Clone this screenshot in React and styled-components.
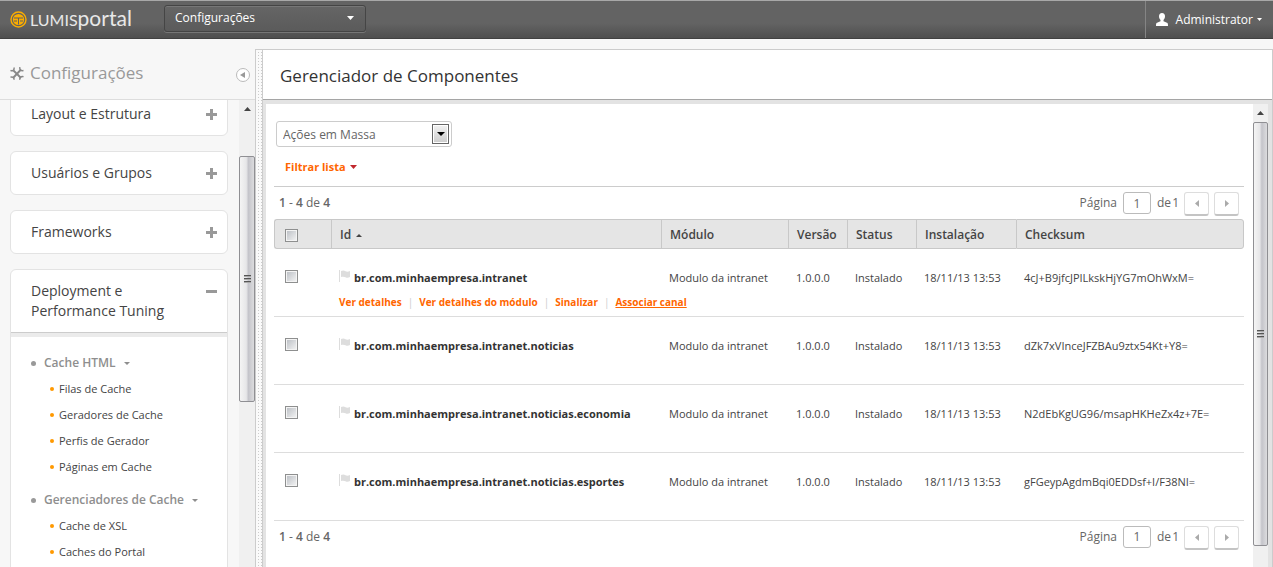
import React from "react";
import styled, { createGlobalStyle } from "styled-components";

const Global = createGlobalStyle`
  *, *::before, *::after { box-sizing: border-box; }
  body {
    margin: 0;
    background: #f7f7f7;
    font: 12px/16px "Open Sans", "Noto Sans", sans-serif;
    color: #444;
  }
  button, input, select { font: inherit; color: inherit; }
  a { color: inherit; text-decoration: none; }
`;

const Shell = styled.div`
  display: flex;
  flex-direction: column;
  height: 100vh;
  overflow: hidden;
`;

const TopBar = styled.header`
  display: flex;
  align-items: stretch;
  flex: none;
  height: 39px;
  border-top: 1px solid #a8a8a8;
  border-bottom: 1px solid #414141;
  background: linear-gradient(#636363 0, #636363 60%, #4f4f4f 100%);
  color: #fff;
`;

const Brand = styled.a`
  display: flex;
  align-items: center;
  gap: 3px;
  width: 154px;
  padding: 0 0 2px 10px;
`;

const BrandName = styled.span`
  font: 400 21px/32px Lato, sans-serif;
  color: #e8e8e8;
`;

const BrandCaps = styled.span`
  font-size: 16px;
`;

const AreaPicker = styled.div`
  display: grid;
  align-self: center;
  width: 202px;
  margin: 0 0 3px 10px;
`;

const AreaSelect = styled.select`
  grid-area: 1 / 1;
  appearance: none;
  height: 27px;
  padding: 0 10px;
  border: 1px solid #454545;
  border-radius: 3px;
  background: linear-gradient(#656565, #5b5b5b);
  box-shadow: inset 0 1px 0 #777, 0 1px 0 #777;
  color: #fff;
`;

const AreaCaret = styled.span`
  grid-area: 1 / 1;
  place-self: center end;
  display: flex;
  margin-right: 12px;
  pointer-events: none;
`;

const UserMenu = styled.button`
  display: flex;
  align-items: center;
  gap: 8px;
  margin-left: auto;
  padding: 0 11px 0 10px;
  border: 0;
  border-left: 1px solid #858585;
  background: none;
`;

const UserName = styled.span`
  display: flex;
  align-items: center;
  gap: 4px;
`;

const Body = styled.div`
  display: flex;
  flex: 1;
  min-height: 0;
`;

const Sidebar = styled.aside`
  display: flex;
  flex-direction: column;
  flex: none;
  width: 255px;
`;

const SideHead = styled.div`
  display: flex;
  align-items: center;
  gap: 6px;
  height: 61px;
  padding: 8px 5px 0 10px;
  border-bottom: 1px solid #ddd;
  color: #999;
`;

const SideTitle = styled.h2`
  flex: 1;
  margin: 0;
  font-size: 17px;
  line-height: 24px;
  font-weight: 400;
`;

const CollapseButton = styled.button`
  display: flex;
  align-items: center;
  justify-content: center;
  width: 14px;
  height: 14px;
  margin-top: 3px;
  padding: 0 1px 0 0;
  border: 1px solid #bbb;
  border-radius: 50%;
  background: #fff;
  color: #999;
`;

const SideScroll = styled.div`
  display: flex;
  flex: 1;
  min-height: 0;
`;

const SideNav = styled.nav`
  flex: 1;
  overflow: hidden;
  padding: 0 11px 0 10px;
`;

const CardList = styled.div`
  display: flex;
  flex-direction: column;
  gap: 15px;
  margin-top: -8px;
`;

const Card = styled.section`
  border: 1px solid #e3e3e3;
  border-radius: 6px;
  background: #fff;
`;

const CardHead = styled.button`
  display: flex;
  align-items: flex-start;
  justify-content: space-between;
  width: 100%;
  padding: 11px 9px 11px 20px;
  border: 0;
  background: none;
  font-size: 14px;
  line-height: 20px;
  text-align: left;
`;

const CardIcon = styled.svg`
  flex: none;
  margin-top: 5px;
`;

const CardBody = styled.div`
  padding: 17px 0 40px 20px;
  border-top: 1px solid #ccc;
  box-shadow: inset 0 4px 0 #ebebeb;
`;

const GroupHead = styled.button`
  display: flex;
  align-items: center;
  gap: 8px;
  height: 26px;
  padding: 0;
  border: 0;
  background: none;
  font-weight: 600;
  color: #8e8e8e;
`;

const Bullet = styled.span`
  width: ${(p) => p.$size}px;
  height: ${(p) => p.$size}px;
  border-radius: 50%;
  background: ${(p) => p.$color};
`;

const LinkList = styled.ul`
  margin: 0 0 7px;
  padding: 0 0 0 19px;
  list-style: none;
`;

const LinkItem = styled.li`
  display: flex;
  align-items: center;
  gap: 5px;
  height: 26px;
  font-size: 11px;
`;

const Track = styled.div`
  display: flex;
  flex-direction: column;
  flex: none;
  width: ${(p) => p.$width}px;
  background: #f0f0f0;
`;

const TrackArrow = styled.div`
  display: flex;
  align-items: center;
  justify-content: center;
  flex: none;
  height: 18px;
  color: #444;
`;

const Thumb = styled.div`
  display: flex;
  flex-direction: column;
  align-items: center;
  justify-content: center;
  gap: 1px;
  border: 1px solid #8f8f93;
  border-radius: 2px;
  background: linear-gradient(90deg, #f4f4f4, #e6e6e8 45%, #c4c4ca 60%, #dcdcde);
`;

const Grip = styled.span`
  width: 7px;
  height: 2px;
  border-top: 1px solid #555;
  background: #aaa;
`;

const Splitter = styled.div`
  flex: none;
  width: 8px;
  margin-top: 10px;
  border: 1px solid #ccc;
  border-bottom: 0;
  background: conic-gradient(#d4d4d4 90deg, transparent 0) 1px 1px / 3px 3px #fafafa;
  background:
    linear-gradient(#fafafa 0 2px, transparent 2px) 0 0 / 3px 3px,
    linear-gradient(90deg, #fafafa 0 2px, #ccc 2px) 0 0 / 3px 3px;
`;

const Main = styled.main`
  display: flex;
  flex-direction: column;
  flex: 1;
  min-width: 0;
  margin-top: 10px;
  border-top: 1px solid #ccc;
  border-right: 1px solid #ccc;
`;

const TitleBar = styled.div`
  flex: none;
  padding: 14px 17px 11px;
  border-bottom: 1px solid #a5a5a5;
  background: #fff;
`;

const PageTitle = styled.h1`
  margin: 0;
  font-size: 17px;
  line-height: 24px;
  font-weight: 400;
  color: #333;
`;

const Frame = styled.div`
  display: flex;
  flex: 1;
  min-height: 0;
  border: solid #e3e3e3;
  border-width: 4px 4px 0 3px;
  background: #fff;
`;

const Content = styled.div`
  flex: 1;
  min-width: 0;
  padding: 17px 9px 0 8px;
  overflow: hidden;
`;

const BulkPicker = styled.div`
  display: grid;
  width: 176px;
  margin-left: 2px;
`;

const BulkSelect = styled.select`
  grid-area: 1 / 1;
  appearance: none;
  height: 26px;
  padding: 2px 6px 0;
  border: 1px solid #ccc;
  border-radius: 3px;
  background: #fff;
  color: #666;
`;

const BulkArrow = styled.span`
  grid-area: 1 / 1;
  place-self: center end;
  display: flex;
  align-items: center;
  justify-content: center;
  width: 17px;
  height: 20px;
  margin-right: 3px;
  border: 1px solid #666;
  background: linear-gradient(#f2f2f2, #ccc);
  box-shadow: inset 0 0 0 1px #fff;
  color: #000;
  pointer-events: none;
`;

const FilterToggle = styled.button`
  display: flex;
  align-items: center;
  gap: 4px;
  margin: 12px 0 11px;
  padding: 0 11px;
  border: 0;
  background: none;
  font-weight: 700;
  font-size: 11px;
  color: #f60;

  svg { color: #c1272d; }
`;

const PagerRow = styled.div`
  display: flex;
  align-items: center;
  justify-content: space-between;
  height: ${(p) => (p.$ruled ? 33 : 31)}px;
  padding: 0 5px;
  border-top: ${(p) => (p.$ruled ? "1px solid #ccc" : "0")};
  color: #666;
`;

const Count = styled.b`
  font-weight: 600;
`;

const PagerNav = styled.div`
  display: flex;
  align-items: center;
`;

const PageInput = styled.input`
  width: 28px;
  height: 22px;
  margin: 0 6px;
  padding: 0;
  border: 1px solid #bbb;
  border-radius: 3px;
  background: #fff;
  text-align: center;
`;

const PageTotal = styled.span`
  display: flex;
  gap: 1px;
`;

const PageButton = styled.button`
  display: flex;
  align-items: center;
  justify-content: center;
  width: 25px;
  height: 24px;
  margin: 2px 0 0 5px;
  padding: 0;
  border: 1px solid #ddd;
  border-bottom: 2px solid #c4c4c4;
  border-radius: 3px;
  background: #fff;
  color: #aaa;
`;

const Table = styled.table`
  width: 100%;
  table-layout: fixed;
  border-collapse: separate;
  border-spacing: 0;
`;

const Col = styled.col`
  width: ${(p) => p.$w};
`;

const Th = styled.th`
  height: 30px;
  padding: 2px 8px 0;
  border: solid #c8c8c8;
  border-width: 1px 0 1px 1px;
  background: #e5e5e5;
  font-weight: 600;
  text-align: left;
  &:first-child { border-radius: 3px 0 0 3px; }
  &:last-child { border-right-width: 1px; border-radius: 0 3px 3px 0; }
`;

const SortLabel = styled.span`
  display: flex;
  align-items: center;
  gap: 5px;
`;

const Td = styled.td`
  height: 68px;
  padding: 21px 7px 0 8px;
  border-bottom: 1px solid #ddd;
  font-size: 11px;
  vertical-align: top;
  white-space: nowrap;
`;

const Check = styled.input.attrs({ type: "checkbox" })`
  appearance: none;
  display: block;
  width: 13px;
  height: 13px;
  margin: 0 0 0 ${(p) => (p.$head ? 2 : 3)}px;
  border: 1px solid #8e8f8f;
  background: linear-gradient(135deg, #b8bcc2, #f6f6f6);
  box-shadow: inset 0 0 0 1px #f4f4f4;
`;

const IdLine = styled.div`
  display: flex;
  gap: 4px;
  font-weight: 700;
  color: #333;
`;

const Actions = styled.div`
  display: flex;
  gap: 6px;
  margin-top: 8px;
  font-size: 10px;
  font-weight: 700;
  color: #f60;
`;

const Action = styled.a`
  text-decoration: ${(p) => (p.$active ? "underline" : "none")};
`;

const Divider = styled.span`
  font-weight: 400;
  color: #ccc;
`;

const Caret = ({ dir = "down", w = 7, h = 4 }) => {
  const d = {
    down: `M0 0H${w}L${w / 2} ${h}Z`,
    up: `M0 ${h}H${w}L${w / 2} 0Z`,
    left: `M${w} 0V${h}L0 ${h / 2}Z`,
    right: `M0 0V${h}L${w} ${h / 2}Z`,
  }[dir];
  return (
    <svg width={w} height={h} aria-hidden="true"><path d={d} fill="currentColor" /></svg>
  );
};

const LogoMark = () => (
  <svg width="17" height="18" viewBox="0 0 17 18" fill="none" stroke="#fbad00" aria-hidden="true">
    <circle cx="8.5" cy="9.5" r="7.5" strokeWidth="1.4" />
    <circle cx="8.500" cy="9.500" r="5.600" fill="#fbad00" stroke="none" />
    <path d="M4 8h9M8.500 8v6.500M4 11h3M10 11h3" stroke="#5f5f5f" strokeWidth="1" />
  </svg>
);

const ToolsIcon = () => (
  <svg width="14" height="15" viewBox="0 0 14 15" fill="none" stroke="#888" aria-hidden="true">
    <path d="M3.500 4.500L11 12M11 3.500L3 12" strokeWidth="1.900" />
    <path d="M.5 4.300C2 5.300 4.300 5 4.200 1.500M9.700 13.800c-.1-3 1.800-3.900 3.800-3.100M9.800 1.200c-.3 2.800 1.200 3.800 3.700 3.300M.5 11.200c2-.8 3.700.2 3.600 2.600" strokeWidth="1.500" />
  </svg>
);

const UserIcon = () => (
  <svg width="12" height="13" viewBox="0 0 12 13" fill="#fff" aria-hidden="true">
    <path d="M6 0c2 0 3 1.300 3 3.200 0 1.800-.8 3-1.500 3.800v1.300L11 9.800c.8.400 1 1 1 3.200H0c0-2.200.2-2.800 1-3.200l3.500-1.500V7C3.800 6.200 3 5 3 3.200 3 1.300 4 0 6 0z" />
  </svg>
);

const FlagIcon = () => (
  <svg width="11" height="12" viewBox="0 0 11 12" fill="#ddd" aria-hidden="true">
    <path d="M0 0h1v12H0zM2 1c2-1 3.500-.5 4.500.2C8 2 9.500 1.600 11 1v6c-1.500.8-3 1-4.500.2C5 6.500 3.500 6.500 2 7z" />
  </svg>
);

const PlusMinus = ({ open }) => (
  <CardIcon width="12" height="12" fill="#999" aria-hidden="true">
    <path d={open ? "M0 4h11v3H0z" : "M0 4h4V0h3v4h4v3H7v4H4V7H0z"} />
  </CardIcon>
);

const Scrollbar = ({ width, before, size }) => (
  <Track $width={width} aria-hidden="true">
    <TrackArrow><Caret dir="up" /></TrackArrow>
    <Thumb style={{ marginTop: before, height: size }}>
      <Grip /><Grip /><Grip />
    </Thumb>
  </Track>
);

const groups = [
  { name: "Cache HTML", links: ["Filas de Cache", "Geradores de Cache", "Perfis de Gerador", "Páginas em Cache"] },
  { name: "Gerenciadores de Cache", links: ["Cache de XSL", "Caches do Portal"] },
];

const rows = [
  { id: "br.com.minhaempresa.intranet", sum: "4cJ+B9jfcJPILkskHjYG7mOhWxM=", actions: true },
  { id: "br.com.minhaempresa.intranet.noticias", sum: "dZk7xVInceJFZBAu9ztx54Kt+Y8=" },
  { id: "br.com.minhaempresa.intranet.noticias.economia", sum: "N2dEbKgUG96/msapHKHeZx4z+7E=" },
  { id: "br.com.minhaempresa.intranet.noticias.esportes", sum: "gFGeypAgdmBqi0EDDsf+I/F38NI=" },
];

const actions = ["Ver detalhes", "Ver detalhes do módulo", "Sinalizar", "Associar canal"];

const Pager = ({ ruled, name }) => (
  <PagerRow $ruled={ruled}>
    <span><Count>1</Count> - <Count>4</Count> de <Count>4</Count></span>
    <PagerNav>
      <label htmlFor={name}>Página</label>
      <PageInput id={name} defaultValue="1" />
      <PageTotal><span>de</span><span>1</span></PageTotal>
      <PageButton aria-label="Página anterior"><Caret dir="left" w={4} h={7} /></PageButton>
      <PageButton aria-label="Próxima página"><Caret dir="right" w={4} h={7} /></PageButton>
    </PagerNav>
  </PagerRow>
);

export default function App() {
  return (
    <>
      <Global />
      <Shell>
        <TopBar>
          <Brand href="#">
            <LogoMark />
            <BrandName><BrandCaps>LUMIS</BrandCaps>portal</BrandName>
          </Brand>
          <AreaPicker>
            <AreaSelect aria-label="Área"><option>Configurações</option></AreaSelect>
            <AreaCaret><Caret /></AreaCaret>
          </AreaPicker>
          <UserMenu>
            <UserIcon />
            <UserName>Administrator <Caret w={5} h={3} /></UserName>
          </UserMenu>
        </TopBar>
        <Body>
          <Sidebar>
            <SideHead>
              <ToolsIcon />
              <SideTitle>Configurações</SideTitle>
              <CollapseButton aria-label="Recolher"><Caret dir="left" w={5} h={6} /></CollapseButton>
            </SideHead>
            <SideScroll>
              <SideNav>
                <CardList>
                  {["Layout e Estrutura", "Usuários e Grupos", "Frameworks"].map((t) => (
                    <Card key={t}><CardHead>{t}<PlusMinus /></CardHead></Card>
                  ))}
                  <Card>
                    <CardHead><span>Deployment e<br />Performance Tuning</span><PlusMinus open /></CardHead>
                    <CardBody>
                      {groups.map((g) => (
                        <div key={g.name}>
                          <GroupHead><Bullet $size={5} $color="#999" />{g.name}<Caret w={6} h={3} /></GroupHead>
                          <LinkList>
                            {g.links.map((l) => (
                              <LinkItem key={l}><Bullet $size={4} $color="#f90" /><a href="#">{l}</a></LinkItem>
                            ))}
                          </LinkList>
                        </div>
                      ))}
                    </CardBody>
                  </Card>
                </CardList>
              </SideNav>
              <Scrollbar width={16} before="38px" size="246px" />
            </SideScroll>
          </Sidebar>
          <Splitter />
          <Main>
            <TitleBar><PageTitle>Gerenciador de Componentes</PageTitle></TitleBar>
            <Frame>
              <Content>
                <BulkPicker>
                  <BulkSelect aria-label="Ações em Massa"><option>Ações em Massa</option></BulkSelect>
                  <BulkArrow><Caret w={8} /></BulkArrow>
                </BulkPicker>
                <FilterToggle>Filtrar lista <Caret w={7} h={4} /></FilterToggle>
                <Pager ruled name="page-top" />
                <Table>
                  <colgroup>
                    <Col $w="57px" /><Col $w="auto" /><Col $w="127px" /><Col $w="59px" />
                    <Col $w="69px" /><Col $w="100px" /><Col $w="228px" />
                  </colgroup>
                  <thead>
                    <tr>
                      <Th><Check aria-label="Selecionar todos" $head /></Th>
                      <Th><SortLabel>Id <Caret dir="up" w={6} h={3} /></SortLabel></Th>
                      <Th>Módulo</Th><Th>Versão</Th><Th>Status</Th><Th>Instalação</Th><Th>Checksum</Th>
                    </tr>
                  </thead>
                  <tbody>
                    {rows.map((r) => (
                      <tr key={r.id}>
                        <Td><Check aria-label={r.id} /></Td>
                        <Td>
                          <IdLine><FlagIcon />{r.id}</IdLine>
                          {r.actions && (
                            <Actions>
                              {actions.map((a, i) => (
                                <React.Fragment key={a}>
                                  {i > 0 && <Divider>|</Divider>}
                                  <Action href="#" $active={i === 3}>{a}</Action>
                                </React.Fragment>
                              ))}
                            </Actions>
                          )}
                        </Td>
                        <Td>Modulo da intranet</Td><Td>1.0.0.0</Td><Td>Instalado</Td>
                        <Td>18/11/13 13:53</Td><Td>{r.sum}</Td>
                      </tr>
                    ))}
                  </tbody>
                </Table>
                <Pager name="page-bottom" />
              </Content>
              <Scrollbar width={15} before="0px" size="424px" />
            </Frame>
          </Main>
        </Body>
      </Shell>
    </>
  );
}
